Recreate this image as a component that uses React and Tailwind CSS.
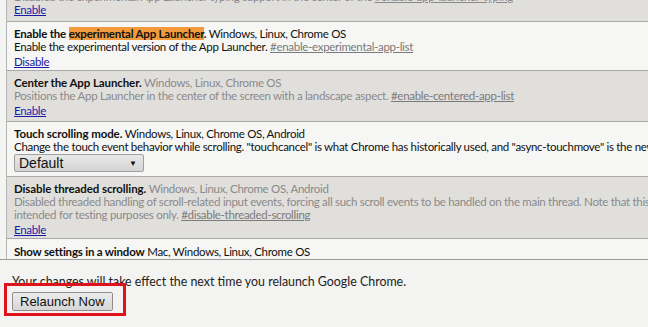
import React from "react";

const F = { fontFamily: 'Lato, "Open Sans", sans-serif' };
const A = { fontFamily: '"Liberation Sans", Arial, sans-serif' };

function Link({ children, gray }) {
  return (
    <span className={gray ? "text-[#7a7a7a] underline" : "text-[#1a1aa6] underline"}>{children}</span>
  );
}

export default function App() {
  return (
    <div className="relative w-[648px] h-[327px] overflow-hidden bg-[#f3f3f1] text-[11.5px] leading-[13px] tracking-[-0.3px] text-[#111]" style={F}>
      <div className="h-[260px] overflow-hidden border-b border-[#9a9a9a] bg-[#f4f4f2]">
        <div className="ml-[6px] w-[720px] border-l border-[#b5b5b5]">
          {/* row 1 (cut) */}
          <div className="h-[22px] bg-[#e1dfdc] border-b border-[#a8a8a8] pl-[7px] whitespace-nowrap overflow-hidden">
            <div className="-mt-[10px] h-[13px] text-[#8a8a8a]">Disabled the experimental App Launcher typing support in the center of the <span className="underline">#enable-app-launcher-typing</span></div>
            <div><Link>Enable</Link></div>
          </div>
          {/* row 2 */}
          <div className="h-[49px] bg-[#f6f6f4] border-b border-[#a8a8a8] pl-[7px] pt-[5px] whitespace-nowrap">
            <div><b className="tracking-[-0.2px]">Enable the <span className="bg-[#f29a3c]">experimental App Launcher</span>.</b> Windows, Linux, Chrome OS</div>
            <div>Enable the experimental version of the App Launcher. <Link gray>#enable-experimental-app-list</Link></div>
            <div className="mt-[2px]"><Link>Disable</Link></div>
          </div>
          {/* row 3 */}
          <div className="h-[51px] bg-[#e1dfdc] border-b border-[#a8a8a8] pl-[7px] pt-[5px] whitespace-nowrap text-[#8a8a8a]">
            <div><b className="text-[#111] tracking-[-0.1px]">Center the App Launcher.</b> Windows, Linux, Chrome OS</div>
            <div>Positions the App Launcher in the center of the screen with a landscape aspect. <Link gray>#enable-centered-app-list</Link></div>
            <div className="mt-[2px]"><Link>Enable</Link></div>
          </div>
          {/* row 4 */}
          <div className="h-[55px] bg-[#f6f6f4] border-b border-[#a8a8a8] pl-[7px] pt-[5px] whitespace-nowrap">
            <div><b className="tracking-[-0.1px]">Touch scrolling mode.</b> Windows, Linux, Chrome OS, Android</div>
            <div>Change the touch event behavior while scrolling. "touchcancel" is what Chrome has historically used, and "async-touchmove" is the new preferred mode.</div>
            <div className="mt-[1px] w-[130px] h-[18px] border border-[#a0a0a0] rounded-[2px] bg-gradient-to-b from-[#e8e8e8] to-[#d4d4d4] flex items-center justify-between pl-[4px] pr-[6px] tracking-normal" style={A}>
              <span className="text-[14px] leading-[16px] text-[#111]">Default</span>
              <span className="text-[8px] text-[#111]">▼</span>
            </div>
          </div>
          {/* row 5 */}
          <div className="h-[62px] bg-[#e1dfdc] border-b border-[#a8a8a8] pl-[7px] pt-[5px] whitespace-nowrap text-[#8a8a8a]">
            <div><b className="text-[#111] tracking-[-0.1px]">Disable threaded scrolling.</b> Windows, Linux, Chrome OS, Android</div>
            <div>Disabled threaded handling of scroll-related input events, forcing all such scroll events to be handled on the main thread. Note that this can</div>
            <div>intended for testing purposes only. <Link gray>#disable-threaded-scrolling</Link></div>
            <div className="mt-[2px]"><Link>Enable</Link></div>
          </div>
          {/* row 6 */}
          <div className="bg-[#f6f6f4] pl-[7px] pt-[6px] whitespace-nowrap">
            <div><b className="tracking-[-0.2px]">Show settings in a window</b> Mac, Windows, Linux, Chrome OS</div>
            <div>Settings will be shown in a separate window rather than as a browser tab. <Link gray>#enable-settings-window</Link></div>
          </div>
        </div>
      </div>
      <div className="pl-[12px] pt-[14px] tracking-normal">
        <div className="text-[12.4px] leading-[15px] text-[#222]">Your changes will take effect the next time you relaunch Google Chrome.</div>
        <div className="mt-[3px] w-fit h-[19px] px-[7px] border border-[#8e8e8e] rounded-[2px] bg-gradient-to-b from-[#ececec] to-[#d6d6d6] flex items-center text-[13px] text-[#111]" style={A}>Relaunch Now</div>
      </div>
      <div className="absolute left-[4px] top-[283px] w-[122px] h-[33px] border-[3px] border-[#e0121c]"></div>
    </div>
  );
}
